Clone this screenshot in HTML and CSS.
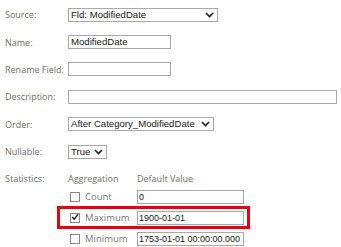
FILE: index.html
```html
<!DOCTYPE html>
<html lang="en">
<head>
    <meta charset="UTF-8">
    <title>Field Properties</title>
    <link rel="stylesheet" href="styles.css">
</head>
<body>
    <div class="form">
        <div class="row">
            <div class="label">Source:</div>
            <div class="select source">
                <span class="value">Fld: ModifiedDate</span>
                <svg class="chev" width="9" height="6" viewBox="0 0 9 6"><path d="M1 1 L4.5 4.5 L8 1" fill="none" stroke="#222" stroke-width="1.6"/></svg>
            </div>
        </div>
        <div class="row">
            <div class="label">Name:</div>
            <div class="input name">ModifiedDate</div>
        </div>
        <div class="row">
            <div class="label">Rename Field:</div>
            <div class="input name"></div>
        </div>
        <div class="row">
            <div class="label">Description:</div>
            <div class="input desc"></div>
        </div>
        <div class="row">
            <div class="label">Order:</div>
            <div class="select order">
                <span class="value">After Category_ModifiedDate</span>
                <svg class="chev" width="9" height="6" viewBox="0 0 9 6"><path d="M1 1 L4.5 4.5 L8 1" fill="none" stroke="#222" stroke-width="1.6"/></svg>
            </div>
        </div>
        <div class="row">
            <div class="label">Nullable:</div>
            <div class="select nullable">
                <span class="value">True</span>
                <svg class="chev" width="9" height="6" viewBox="0 0 9 6"><path d="M1 1 L4.5 4.5 L8 1" fill="none" stroke="#222" stroke-width="1.6"/></svg>
            </div>
        </div>

        <div class="stats">
            <div class="stats-head">
                <div class="label">Statistics:</div>
                <div class="col-agg">Aggregation</div>
                <div class="col-def">Default Value</div>
            </div>
            <div class="stat-row">
                <div class="col-agg"><span class="check"></span>Count</div>
                <div class="input stat">0</div>
            </div>
            <div class="stat-row highlight">
                <div class="col-agg">
                    <span class="check">
                        <svg width="10" height="10" viewBox="0 0 10 10"><path d="M1.5 5 L4 7.8 L8.8 1.8" fill="none" stroke="#111" stroke-width="1.6"/></svg>
                    </span>Maximum
                </div>
                <div class="input stat">1900-01-01</div>
                <div class="redbox"></div>
            </div>
            <div class="stat-row">
                <div class="col-agg"><span class="check"></span>Minimum</div>
                <div class="input stat">1753-01-01 00:00:00.000</div>
            </div>
        </div>
    </div>
</body>
</html>
```

FILE: styles.css
```css
body {
    margin: 0;
    background: #fff;
    font-family: "Open Sans", "Noto Sans", sans-serif;
    font-size: 9px;
    color: #666;
}

.form {
    padding: 1px 0 0 5px;
}

.row {
    display: flex;
    align-items: center;
    height: 27.4px;
}

.label {
    width: 63px;
    flex: none;
    color: #707070;
    white-space: nowrap;
}

/* inputs and selects */
.input, .select {
    box-sizing: border-box;
    height: 14px;
    border: 1px solid #a9a9a9;
    font-family: "Liberation Sans", Arial, sans-serif;
    font-size: 9.6px;
    line-height: 12px;
    color: #222;
    padding: 0 2px;
    white-space: nowrap;
    overflow: hidden;
    background: #fff;
}

.select {
    display: flex;
    align-items: center;
    justify-content: space-between;
    padding-right: 3px;
}

.source { width: 150px; }
.order { width: 146px; }
.nullable { width: 39px; }
.name { width: 103px; }
.desc { width: 269px; }

/* statistics */
.stats {
    margin-top: 5px;
}

.stats-head {
    display: flex;
    align-items: center;
    height: 16px;
}

.col-agg {
    width: 69px;
    flex: none;
    display: flex;
    align-items: center;
    color: #707070;
    white-space: nowrap;
}

.col-def {
    color: #707070;
}

.stat-row {
    display: flex;
    align-items: center;
    height: 21px;
    position: relative;
    margin-left: 63px;
}

.stat-row .col-agg {
    padding-left: 2px;
    width: 67px;
    color: #777;
    font-size: 9.5px;
}

.check {
    width: 10px;
    height: 10px;
    box-sizing: border-box;
    border: 1px solid #888;
    margin-right: 5px;
    display: flex;
    align-items: center;
    justify-content: center;
}

.check svg {
    display: block;
    margin-top: -1px;
}

.stat {
    width: 107px;
    padding: 0 1px;
    font-size: 9px;
}

.redbox {
    position: absolute;
    left: -11px;
    top: -1px;
    width: 193px;
    height: 23px;
    box-sizing: border-box;
    border: 3px solid #e8000b;
}
```
